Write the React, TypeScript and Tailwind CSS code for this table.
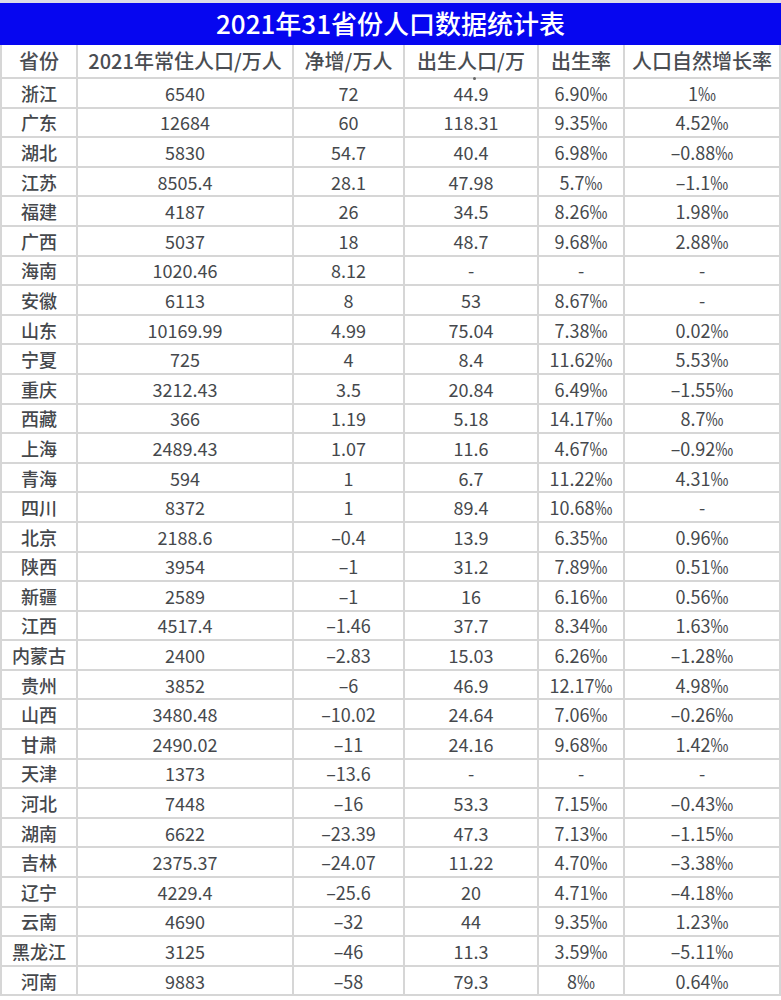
import React from "react";

const rows: string[][] = [
  ["浙江", "6540", "72", "44.9", "6.90‰", "1‰"],
  ["广东", "12684", "60", "118.31", "9.35‰", "4.52‰"],
  ["湖北", "5830", "54.7", "40.4", "6.98‰", "–0.88‰"],
  ["江苏", "8505.4", "28.1", "47.98", "5.7‰", "–1.1‰"],
  ["福建", "4187", "26", "34.5", "8.26‰", "1.98‰"],
  ["广西", "5037", "18", "48.7", "9.68‰", "2.88‰"],
  ["海南", "1020.46", "8.12", "-", "-", "-"],
  ["安徽", "6113", "8", "53", "8.67‰", "-"],
  ["山东", "10169.99", "4.99", "75.04", "7.38‰", "0.02‰"],
  ["宁夏", "725", "4", "8.4", "11.62‰", "5.53‰"],
  ["重庆", "3212.43", "3.5", "20.84", "6.49‰", "–1.55‰"],
  ["西藏", "366", "1.19", "5.18", "14.17‰", "8.7‰"],
  ["上海", "2489.43", "1.07", "11.6", "4.67‰", "–0.92‰"],
  ["青海", "594", "1", "6.7", "11.22‰", "4.31‰"],
  ["四川", "8372", "1", "89.4", "10.68‰", "-"],
  ["北京", "2188.6", "–0.4", "13.9", "6.35‰", "0.96‰"],
  ["陕西", "3954", "–1", "31.2", "7.89‰", "0.51‰"],
  ["新疆", "2589", "–1", "16", "6.16‰", "0.56‰"],
  ["江西", "4517.4", "–1.46", "37.7", "8.34‰", "1.63‰"],
  ["内蒙古", "2400", "–2.83", "15.03", "6.26‰", "–1.28‰"],
  ["贵州", "3852", "–6", "46.9", "12.17‰", "4.98‰"],
  ["山西", "3480.48", "–10.02", "24.64", "7.06‰", "–0.26‰"],
  ["甘肃", "2490.02", "–11", "24.16", "9.68‰", "1.42‰"],
  ["天津", "1373", "–13.6", "-", "-", "-"],
  ["河北", "7448", "–16", "53.3", "7.15‰", "–0.43‰"],
  ["湖南", "6622", "–23.39", "47.3", "7.13‰", "–1.15‰"],
  ["吉林", "2375.37", "–24.07", "11.22", "4.70‰", "–3.38‰"],
  ["辽宁", "4229.4", "–25.6", "20", "4.71‰", "–4.18‰"],
  ["云南", "4690", "–32", "44", "9.35‰", "1.23‰"],
  ["黑龙江", "3125", "–46", "11.3", "3.59‰", "–5.11‰"],
  ["河南", "9883", "–58", "79.3", "8‰", "0.64‰"],
];

const headers = ["省份", "2021年常住人口/万人", "净增/万人", "出生人口/万", "出生率", "人口自然增长率"];

export default function App() {
  return (
    <div
      className="w-[781px] h-[1000px] bg-white overflow-hidden"
      style={{ fontFamily: '"Noto Sans CJK SC", "Noto Sans", sans-serif' }}
    >
      <div className="h-[3px] bg-[#dcdce8]" />
      <div className="h-[42px] bg-[#0606f0] flex items-center justify-center text-white text-[26px] font-medium leading-none pb-[2px]">
        2021年31省份人口数据统计表
      </div>
      <div className="grid grid-cols-[76px_216px_111px_134px_86px_156px] border-l-2 border-[#d6d6d6] text-[#444444]">
        {headers.map((h, i) => (
          <div
            key={h}
            className="relative h-[34px] flex items-center justify-center border-r-2 border-b-2 border-[#d6d6d6] text-[20px] font-medium text-[#4a4d52] leading-none whitespace-nowrap"
          >
            {h}
            {i === 3 && <span className="absolute left-[68px] bottom-[-3px] w-[3px] h-[3px] rounded-full bg-[#666]" />}
          </div>
        ))}
        {rows.map((r) =>
          r.map((c, j) => (
            <div
              key={r[0] + j}
              className={
                "h-[29.6px] flex items-center justify-center border-r-2 border-b-2 border-[#d6d6d6] leading-none whitespace-nowrap " +
                (j === 0 ? "text-[18px] font-medium text-[#45484c]" : "text-[18px] text-[#45484c]")
              }
            >
              {c}
            </div>
          ))
        )}
      </div>
    </div>
  );
}
